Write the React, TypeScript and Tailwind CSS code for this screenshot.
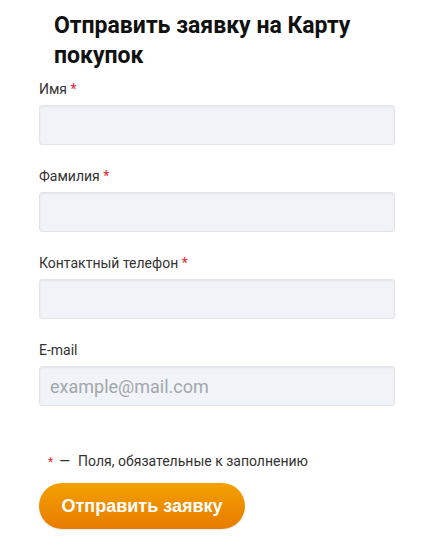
export default function App() {
  const fields = [
    { label: 'Имя', required: true, placeholder: '' },
    { label: 'Фамилия', required: true, placeholder: '' },
    { label: 'Контактный телефон', required: true, placeholder: '' },
    { label: 'E-mail', required: false, placeholder: 'example@mail.com' },
  ]

  return (
    <div className="min-h-[550px] w-[432px] bg-white font-['Roboto',sans-serif] text-[#333]">
      <div className="pl-[39px] pr-[37px] pt-[11px]">
        <h1 className="pl-[15px] text-[23px] font-bold leading-[30px] text-[#111]">
          Отправить заявку на Карту покупок
        </h1>

        <form className="mt-[10px]" onSubmit={e => e.preventDefault()}>
          {fields.map(f => (
            <div key={f.label} className="mb-[23px]">
              <label className="block text-[14px] leading-[17px] text-[#333]">
                {f.label}
                {f.required ? <span className="text-[#e3262f]"> *</span> : null}
              </label>
              <input
                type="text"
                placeholder={f.placeholder}
                className="mt-[7px] block h-[40px] w-full rounded-[3px] border border-[#e1e5ea] bg-[#f0f4f8] px-[10px] text-[18px] text-[#333] shadow-[inset_0_1px_2px_rgba(0,0,0,0.06)] outline-none placeholder:text-[#a3a7ab]"
              />
            </div>
          ))}

          <p className="mt-[44px] flex items-center pl-[9px] text-[14px] leading-[18px] text-[#333]">
            <span className="mt-[3px] text-[12px] text-[#e3262f]">*</span>
            <span className="ml-[6px]">—</span>
            <span className="ml-[8px]">Поля, обязательные к заполнению</span>
          </p>

          <button
            type="submit"
            className="mt-[12px] h-[46px] w-[206px] rounded-full bg-gradient-to-b from-[#f3a000] to-[#e87b00] font-['Liberation_Sans',Arial,sans-serif] text-[18px] font-bold text-white shadow-[0_1px_2px_rgba(0,0,0,0.1)]"
          >
            Отправить заявку
          </button>
        </form>
      </div>
    </div>
  )
}
